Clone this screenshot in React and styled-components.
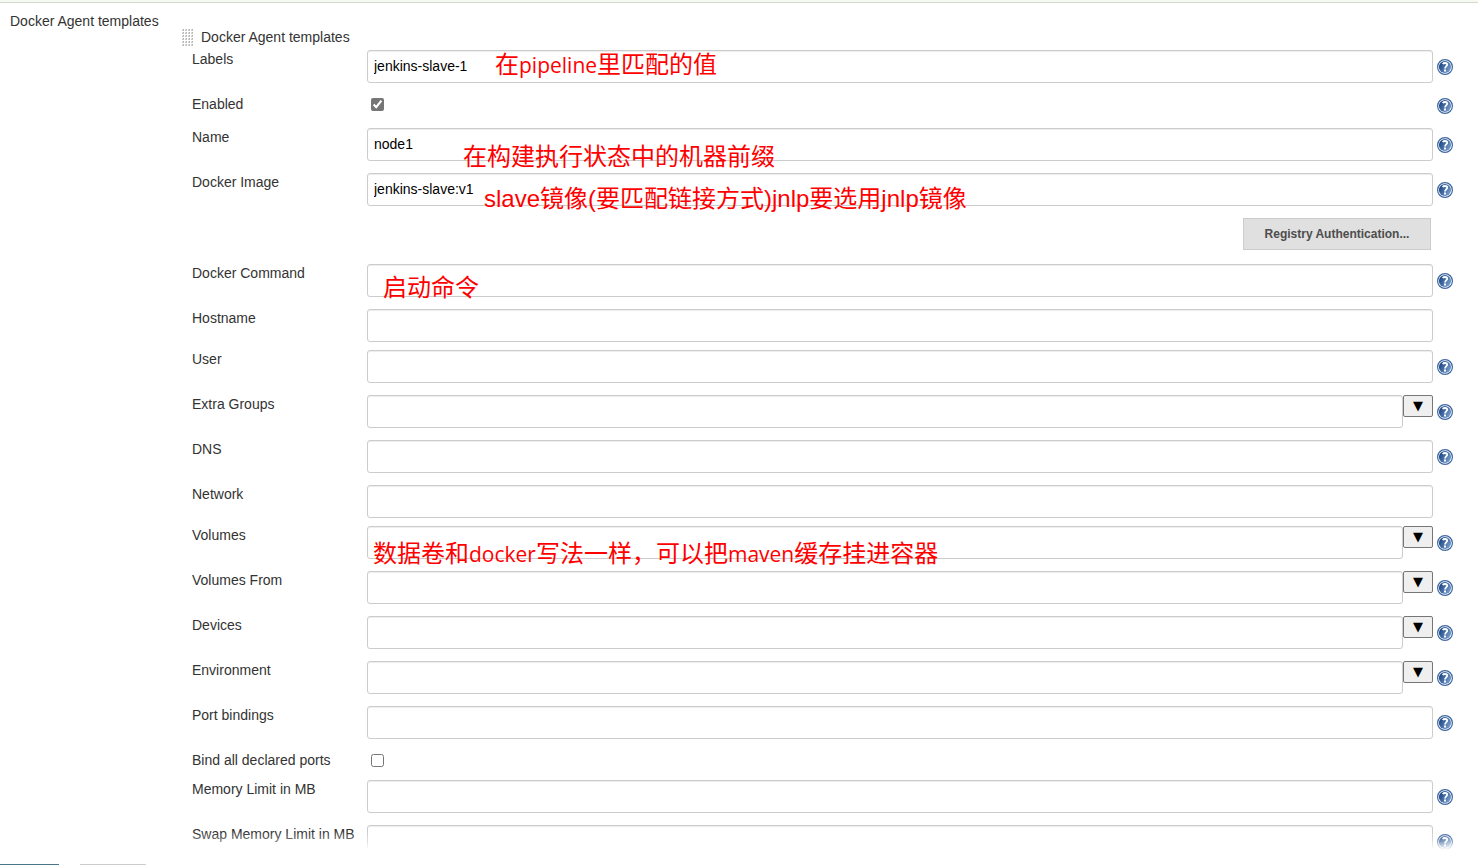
import React from "react";
import styled, { createGlobalStyle } from "styled-components";

const GlobalStyle = createGlobalStyle`
  *, *::before, *::after { box-sizing: border-box; }
  body {
    margin: 0;
    background: #fff;
    color: #333;
    font: 14px/18px "Liberation Sans", "Noto Sans CJK SC", sans-serif;
  }
`;

const Page = styled.div`
  position: relative;
  display: flex;
  flex-direction: column;
  height: 100vh;
  overflow: hidden;
`;

const TopStrip = styled.header`
  flex: none;
  height: 3px;
  background: #f6faf2;
  border-bottom: 1px solid #d3d7cf;
`;

const Section = styled.main`
  flex: 1;
  min-height: 0;
  display: flex;
  padding: 9px 25px 0 10px;
`;

const SectionTitle = styled.h2`
  flex: none;
  width: 172px;
  margin: 0;
  font-size: 14px;
  line-height: 18px;
  font-weight: 400;
`;

const Template = styled.form`
  flex: 1;
  min-width: 0;
  padding-top: 16px;
`;

const TemplateHeader = styled.div`
  display: flex;
  align-items: flex-start;
  gap: 8px;
  height: 22px;
`;

const TemplateTitle = styled.h3`
  margin: 0;
  font-size: 14px;
  font-weight: 400;
`;

const Handle = styled.svg`
  flex: none;
  width: 11px;
  height: 17px;
  margin-top: 1px;
`;

const Row = styled.div`
  position: relative;
  display: flex;
  align-items: flex-start;
  height: ${(p) => p.$height}px;
  padding-left: 10px;
`;

const Label = styled.label`
  flex: none;
  width: 175px;
  white-space: nowrap;
`;

const Control = styled.div`
  flex: 1;
  min-width: 0;
  display: flex;
  align-items: flex-start;
`;

const TextInput = styled.input`
  flex: 1;
  min-width: 0;
  height: 33px;
  padding: 0 6px 2px;
  border: 1px solid #ccc;
  border-radius: 3px;
  background: #fff;
  box-shadow: inset 0 1px 1px rgba(0, 0, 0, 0.075);
  color: #000;
  font: inherit;
  outline: none;
`;

const ExpandButton = styled.button`
  width: 30px;
  height: 22px;
  padding: 0;
  border: 1px solid #767676;
  border-radius: 2px;
  background: #efefef;
  color: #000;
  font: 13px/18px "DejaVu Sans", sans-serif;
`;

const CheckBox = styled.input`
  width: 13px;
  height: 13px;
  margin: 3px 4px;
  accent-color: #767676;
`;

const AuthButton = styled.button`
  width: 188px;
  height: 32px;
  margin: 0 2px 0 auto;
  padding: 0;
  border: 1px solid #ccc;
  background: #e0e0e0;
  color: #4d4d4d;
  font: bold 12px/18px "Liberation Sans", sans-serif;
`;

const HelpCell = styled.div`
  flex: none;
  width: 20px;
  padding: ${(p) => p.$top}px 0 0 4px;
`;

const HelpLink = styled.a`
  display: block;
  width: 16px;
  height: 16px;
`;

const Note = styled.span`
  position: absolute;
  z-index: 1;
  left: ${(p) => p.$left}px;
  top: ${(p) => p.$top}px;
  color: #f00;
  font-family: "Liberation Sans", "Noto Sans CJK SC", sans-serif;
  font-size: 24px;
  line-height: 32px;
  white-space: nowrap;
  pointer-events: none;
`;

const Latin = styled.span`
  font-family: "Open Sans", sans-serif;
  font-size: 21px;
  line-height: 1;
`;

const BottomBar = styled.footer`
  position: absolute;
  z-index: 2;
  left: 0;
  right: 0;
  bottom: 0;
  display: flex;
  gap: 21px;
  height: 33px;
  padding-top: 32px;
  overflow: hidden;
  background: linear-gradient(rgba(255, 255, 255, 0), rgba(255, 255, 255, 0.35) 9px, #fff 18px);
`;

const BarButton = styled.button`
  flex: none;
  width: ${(p) => p.$width}px;
  height: 32px;
  padding: 0;
  border: 1px solid ${(p) => (p.$primary ? "#4b758b" : "#ccc")};
  background: ${(p) => (p.$primary ? "#4b758b" : "#e0e0e0")};
`;

function HelpIcon() {
  return (
    <svg width="16" height="16" viewBox="0 0 16 16" aria-hidden="true">
      <defs>
        <linearGradient id="helpFill" x1="0" y1="0.2" x2="1" y2="0.8">
          <stop offset="0.1" stopColor="#204a87" />
          <stop offset="1" stopColor="#7ea3d2" />
        </linearGradient>
      </defs>
      <circle cx="8" cy="8" r="7.4" fill="#fff" stroke="#3d669f" strokeWidth="1.2" />
      <circle cx="8" cy="8" r="6.1" fill="url(#helpFill)" />
      <path
        d="M5.700 5C6.300 4.200 7.100 4 8 4c1.300 0 2.200.7 2.200 1.800C10.200 7.300 8 7.500 8 9.500"
        fill="none"
        stroke="#fff"
        strokeWidth="1.800"
      />
      <rect x="7" y="10.500" width="2" height="2" fill="#fff" />
    </svg>
  );
}

function DragHandle() {
  const dots = [];
  for (let y = 0; y < 6; y++) {
    for (let x = 0; x < 4; x++) {
      dots.push(
        <g key={`${x}-${y}`} transform={`translate(${x * 3} ${y * 3})`}>
          <rect width="2" height="2" fill="#c8c8c8" />
          <rect width="1" height="1" fill="#e2e2e2" />
          <rect x="1" width="1" height="1" fill="#b0b0b0" />
        </g>
      );
    }
  }
  return <Handle viewBox="0 0 11 17" aria-hidden="true">{dots}</Handle>;
}

const FIELDS = [
  {
    id: "labels",
    label: "Labels",
    value: "jenkins-slave-1",
    help: true,
    note: { text: <>在<Latin>pipeline</Latin>里匹配的值</>, left: 313, top: -1 },
  },
  { id: "enabled", label: "Enabled", kind: "check", checked: true, help: true },
  { id: "name", label: "Name", value: "node1", help: true, note: { text: "在构建执行状态中的机器前缀", left: 281, top: 13 } },
  {
    id: "image",
    label: "Docker Image",
    value: "jenkins-slave:v1",
    help: true,
    note: { text: "slave镜像(要匹配链接方式)jnlp要选用jnlp镜像", left: 302, top: 10 },
  },
  { id: "registry", kind: "button", text: "Registry Authentication..." },
  { id: "command", label: "Docker Command", help: true, note: { text: "启动命令", left: 201, top: 8 } },
  { id: "hostname", label: "Hostname" },
  { id: "user", label: "User", help: true },
  { id: "groups", label: "Extra Groups", kind: "expand", help: true },
  { id: "dns", label: "DNS", help: true },
  { id: "network", label: "Network" },
  {
    id: "volumes",
    label: "Volumes",
    kind: "expand",
    help: true,
    note: {
      text: <>数据卷和<Latin>docker</Latin>写法一样，可以把<Latin>maven</Latin>缓存挂进容器</>,
      left: 191,
      top: 12,
    },
  },
  { id: "volumesFrom", label: "Volumes From", kind: "expand", help: true },
  { id: "devices", label: "Devices", kind: "expand", help: true },
  { id: "environment", label: "Environment", kind: "expand", help: true },
  { id: "ports", label: "Port bindings", help: true },
  { id: "bindAll", label: "Bind all declared ports", kind: "check" },
  { id: "memory", label: "Memory Limit in MB", help: true },
  { id: "swap", label: "Swap Memory Limit in MB", help: true },
];

function rowHeight({ kind, help }) {
  if (kind === "button") return 46;
  if (kind === "check") return help ? 33 : 29;
  return help ? 45 : 41;
}

function Field({ field }) {
  const { id, label, kind, value, checked, text, help, note } = field;
  return (
    <Row $height={rowHeight(field)}>
      {label && <Label htmlFor={id}>{label}</Label>}
      <Control>
        {kind === "button" && <AuthButton type="button">{text}</AuthButton>}
        {kind === "check" && <CheckBox id={id} type="checkbox" defaultChecked={checked} />}
        {(!kind || kind === "expand") && <TextInput id={id} type="text" defaultValue={value} />}
        {kind === "expand" && <ExpandButton type="button" aria-label={`Expand ${label}`}>▼</ExpandButton>}
      </Control>
      <HelpCell $top={kind === "check" ? 3 : 9}>
        {help && (
          <HelpLink href="#" aria-label={`Help for ${label}`}>
            <HelpIcon />
          </HelpLink>
        )}
      </HelpCell>
      {note && (
        <Note $left={note.left} $top={note.top}>
          {note.text}
        </Note>
      )}
    </Row>
  );
}

export default function App() {
  return (
    <>
      <GlobalStyle />
      <Page>
        <TopStrip />
        <Section>
          <SectionTitle>Docker Agent templates</SectionTitle>
          <Template>
            <TemplateHeader>
              <DragHandle />
              <TemplateTitle>Docker Agent templates</TemplateTitle>
            </TemplateHeader>
            {FIELDS.map((field) => (
              <Field key={field.id} field={field} />
            ))}
          </Template>
        </Section>
        <BottomBar>
          <BarButton type="button" $primary $width={59} aria-label="Save" />
          <BarButton type="button" $width={66} aria-label="Apply" />
        </BottomBar>
      </Page>
    </>
  );
}
